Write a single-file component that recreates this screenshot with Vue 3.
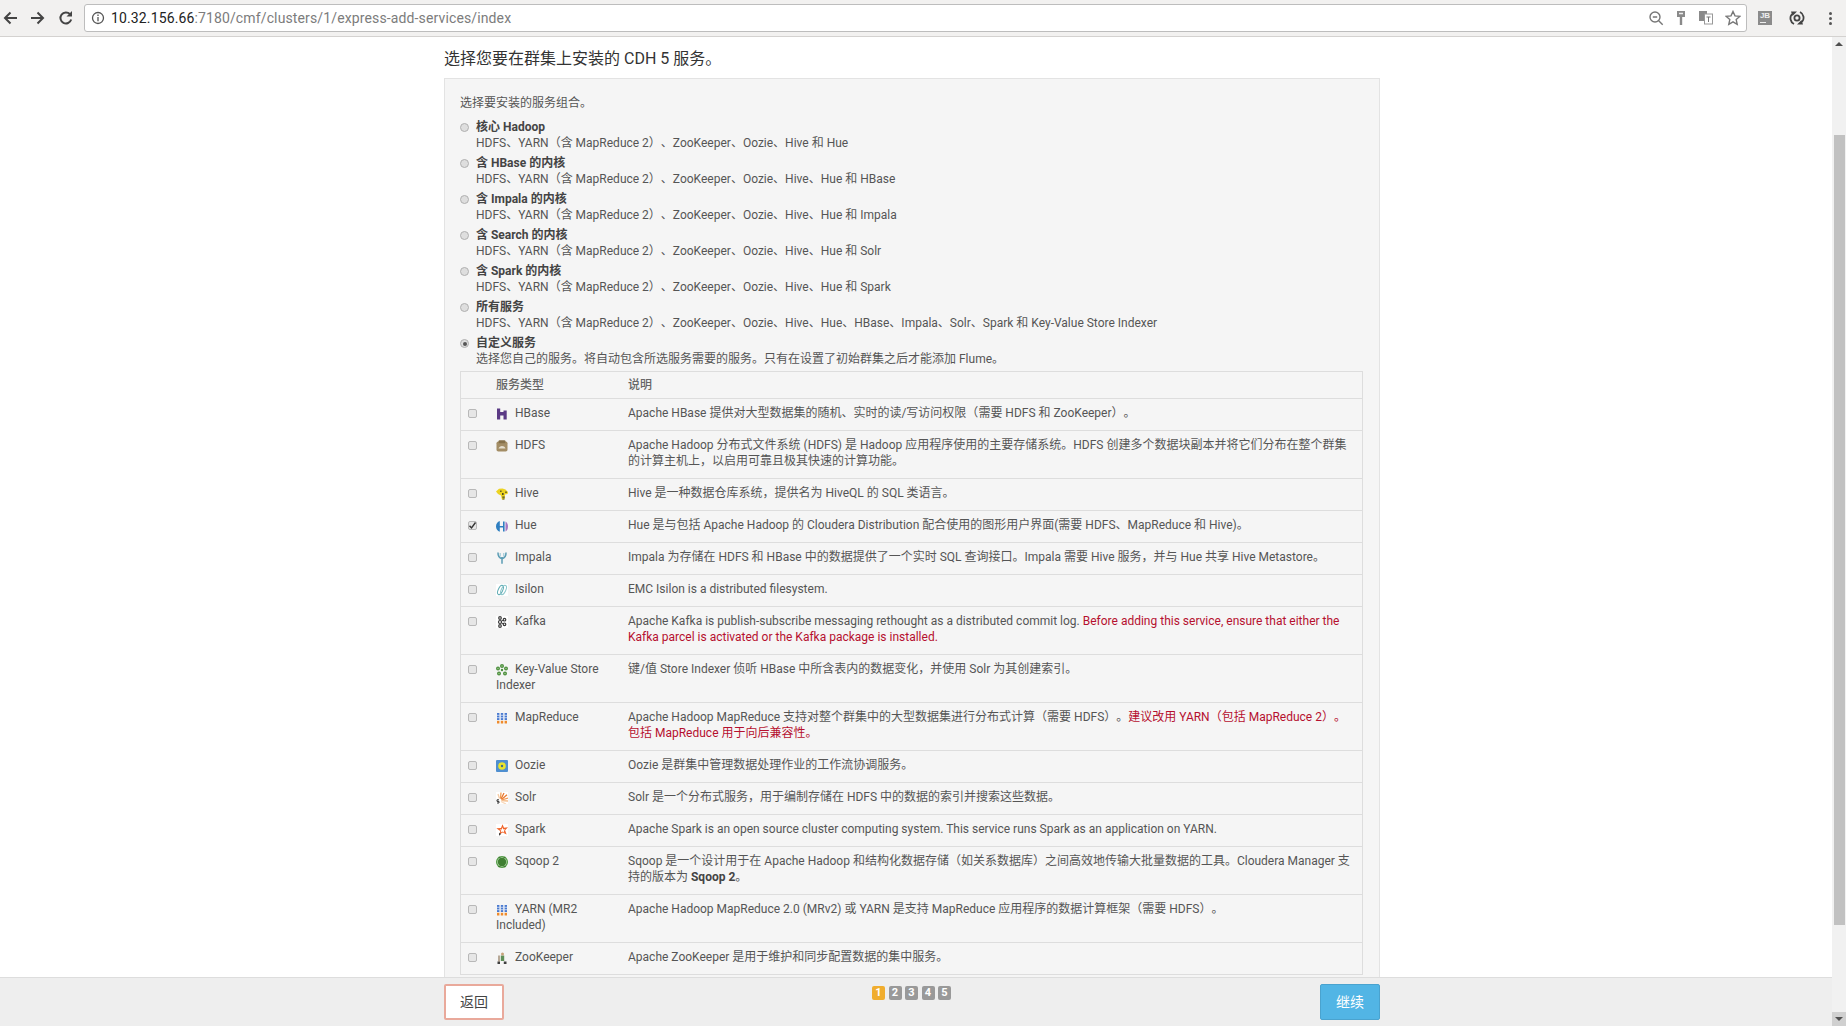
<script setup>
const plans = [
  { t: '核心 Hadoop', d: 'HDFS、YARN（含 MapReduce 2）、ZooKeeper、Oozie、Hive 和 Hue' },
  { t: '含 HBase 的内核', d: 'HDFS、YARN（含 MapReduce 2）、ZooKeeper、Oozie、Hive、Hue 和 HBase' },
  { t: '含 Impala 的内核', d: 'HDFS、YARN（含 MapReduce 2）、ZooKeeper、Oozie、Hive、Hue 和 Impala' },
  { t: '含 Search 的内核', d: 'HDFS、YARN（含 MapReduce 2）、ZooKeeper、Oozie、Hive、Hue 和 Solr' },
  { t: '含 Spark 的内核', d: 'HDFS、YARN（含 MapReduce 2）、ZooKeeper、Oozie、Hive、Hue 和 Spark' },
  { t: '所有服务', d: 'HDFS、YARN（含 MapReduce 2）、ZooKeeper、Oozie、Hive、Hue、HBase、Impala、Solr、Spark 和 Key-Value Store Indexer' },
  { t: '自定义服务', d: '选择您自己的服务。将自动包含所选服务需要的服务。只有在设置了初始群集之后才能添加 Flume。', on: true },
]
const services = [
  { n: 'HBase', i: 'hbase', d: [['Apache HBase 提供对大型数据集的随机、实时的读/写访问权限（需要 HDFS 和 ZooKeeper）。']] },
  { n: 'HDFS', i: 'hdfs', d: [['Apache Hadoop 分布式文件系统 (HDFS) 是 Hadoop 应用程序使用的主要存储系统。HDFS 创建多个数据块副本并将它们分布在整个群集的计算主机上，以启用可靠且极其快速的计算功能。']] },
  { n: 'Hive', i: 'hive', d: [['Hive 是一种数据仓库系统，提供名为 HiveQL 的 SQL 类语言。']] },
  { n: 'Hue', i: 'hue', on: true, d: [['Hue 是与包括 Apache Hadoop 的 Cloudera Distribution 配合使用的图形用户界面(需要 HDFS、MapReduce 和 Hive)。']] },
  { n: 'Impala', i: 'impala', d: [['Impala 为存储在 HDFS 和 HBase 中的数据提供了一个实时 SQL 查询接口。Impala 需要 Hive 服务，并与 Hue 共享 Hive Metastore。']] },
  { n: 'Isilon', i: 'isilon', d: [['EMC Isilon is a distributed filesystem.']] },
  { n: 'Kafka', i: 'kafka', d: [['Apache Kafka is publish-subscribe messaging rethought as a distributed commit log. '], ['Before adding this service, ensure that either the Kafka parcel is activated or the Kafka package is installed.', 'red']] },
  { n: 'Key-Value Store Indexer', i: 'kv', d: [['键/值 Store Indexer 侦听 HBase 中所含表内的数据变化，并使用 Solr 为其创建索引。']] },
  { n: 'MapReduce', i: 'mr', d: [['Apache Hadoop MapReduce 支持对整个群集中的大型数据集进行分布式计算（需要 HDFS）。'], ['建议改用 YARN（包括 MapReduce 2）。包括 MapReduce 用于向后兼容性。', 'red']] },
  { n: 'Oozie', i: 'oozie', d: [['Oozie 是群集中管理数据处理作业的工作流协调服务。']] },
  { n: 'Solr', i: 'solr', d: [['Solr 是一个分布式服务，用于编制存储在 HDFS 中的数据的索引并搜索这些数据。']] },
  { n: 'Spark', i: 'spark', d: [['Apache Spark is an open source cluster computing system. This service runs Spark as an application on YARN.']] },
  { n: 'Sqoop 2', i: 'sqoop', d: [['Sqoop 是一个设计用于在 Apache Hadoop 和结构化数据存储（如关系数据库）之间高效地传输大批量数据的工具。Cloudera Manager 支持的版本为 '], ['Sqoop 2', 'bold'], ['。']] },
  { n: 'YARN (MR2 Included)', i: 'mr', d: [['Apache Hadoop MapReduce 2.0 (MRv2) 或 YARN 是支持 MapReduce 应用程序的数据计算框架（需要 HDFS）。']] },
  { n: 'ZooKeeper', i: 'zk', d: [['Apache ZooKeeper 是用于维护和同步配置数据的集中服务。']] },
]
const steps = [1, 2, 3, 4, 5]
</script>

<template>
  <div class="window">
    <header class="toolbar">
      <svg class="nav" width="16" height="16" viewBox="0 0 16 16"><path d="M15 8H3M8.5 2.500 3 8l5.500 5.500" /></svg>
      <svg class="nav" width="16" height="16" viewBox="0 0 16 16"><path d="M1 8h12M7.500 2.500 13 8l-5.500 5.500" /></svg>
      <svg class="nav" width="16" height="16" viewBox="0 0 16 16"><path d="M13.200 9.500A5.500 5.500 0 1 1 12 4.200" /><path class="fill" d="M14 1v5.500H8.500z" /></svg>
      <div class="omnibox">
        <svg class="info" width="14" height="14" viewBox="0 0 14 14"><circle cx="7" cy="7" r="5.500" /><path d="M7 6v4.200M7 3.600v1.300" /></svg>
        <span class="url"><b>10.32.156.66</b>:7180/cmf/clusters/1/express-add-services/index</span>
        <div class="omni-icons">
          <svg width="16" height="16" viewBox="0 0 16 16"><circle cx="7" cy="7" r="5" /><path d="M4.800 7h4.400M10.700 10.700l4 4" /></svg>
          <svg width="12" height="16" viewBox="0 0 12 16"><path class="fill key" d="M2 1h8v6H7.200v8H4.800V7H2z" /><path class="notch" d="M4 3.500h4" /></svg>
          <svg width="16" height="16" viewBox="0 0 16 16"><rect class="fill key" x="1" y="1" width="8" height="10" /><rect x="6.500" y="4" width="8" height="10" class="paper" /><path d="M8.500 7h4M10.500 7v5" class="thin" /></svg>
          <svg width="16" height="16" viewBox="0 0 16 16"><path d="m8 1.500 2 4.400 4.800.5-3.600 3.200 1 4.700L8 11.900l-4.200 2.400 1-4.700-3.600-3.200 4.800-.5z" /></svg>
        </div>
      </div>
      <div class="ext-icons">
        <span class="jb">JB<i></i></span>
        <svg width="16" height="16" viewBox="0 0 16 16"><path class="bold" d="M3 4a6.500 6.500 0 0 0 2 10M13 12A6.500 6.500 0 0 0 11 2" /><circle class="bold" cx="8" cy="8" r="2.600" /><path class="fill dark" d="M2 1.500h6L3.500 6zM14 14.500H8L12.500 10z" /></svg>
        <span class="dots"><i></i><i></i><i></i></span>
      </div>
    </header>

    <div class="viewport">
      <div class="page">
        <main class="content">
          <h1 class="title">选择您要在群集上安装的 CDH 5 服务。</h1>
          <section class="panel">
            <p class="lead">选择要安装的服务组合。</p>
            <div class="plans">
              <label v-for="p in plans" :key="p.t" class="plan">
                <span class="radio" :class="{ on: p.on }"></span>
                <span class="plan-text"><strong>{{ p.t }}</strong><span>{{ p.d }}</span></span>
              </label>
            </div>
            <table class="services">
              <thead>
                <tr><th class="c1"></th><th class="c2">服务类型</th><th>说明</th></tr>
              </thead>
              <tbody>
                <tr v-for="s in services" :key="s.n">
                  <td class="c1"><span class="check" :class="{ on: s.on }"><svg v-if="s.on" width="9" height="9" viewBox="0 0 9 9"><path d="M1.500 4.800 3.500 7l4-5.500" /></svg></span></td>
                  <td class="c2">
                    <svg class="icon" width="12" height="12" viewBox="0 0 12 12">
                      <g v-if="s.i === 'hbase'"><path fill="#5b3a85" d="M1 .5h3.200V4h3.300V2.500h3.200V11.500H7.500V7.500H4.200v4H1z" /></g>
                      <g v-else-if="s.i === 'hdfs'"><rect x=".5" y="1.500" width="11" height="10" rx="1.800" fill="#a38d65" /><rect x="2.500" y=".2" width="7" height="3" rx="1.200" fill="#857049" /><path d="M2.500 8.500C3.500 5.500 8 5 9.500 8.500z" fill="#e6dfcf" /></g>
                      <g v-else-if="s.i === 'hive'"><path fill="#ecd321" d="M0 3.500 3 .8 6.500.5 9.500 1.500 12 4l-.5 2-2.500.5-.3 4.500-2.700.8-1-4.300-3-1.500z" /><path fill="#4d4a20" d="M4.200 2.500h1.300v1.600H4.200zM6 5h1.600v2H6zM9.300 3.500h1.400v1.400H9.300zM6.300 8.500h2.400v1.300H6.300zM6.500 10.500h2v1H6.500z" /></g>
                      <g v-else-if="s.i === 'hue'"><path fill="#2f7fc1" d="M3.800 1C1.500 1.800 0 3.800 0 6.500s1.500 4.400 3.800 5.200V7.600H7v3.900h1.600V1.500H7v4.400H3.800z" /><path fill="#a577c4" d="M9.500 1.500C11 2.400 12 4 12 6.500s-1 4.200-2.500 5z" /></g>
                      <g v-else-if="s.i === 'impala'"><path fill="none" stroke="#5b9cb4" stroke-width="1.500" d="M2 .5C1.800 4.500 3.500 6 6 6.800M10 .5C10.200 4.500 8.500 6 6 6.800M6 5v6.800" /><path fill="none" stroke="#93c3d2" d="M4.200 1v3.500M7.800 1v3.500" /></g>
                      <g v-else-if="s.i === 'isilon'"><rect width="12" height="12" fill="#fff" /><ellipse cx="4.500" cy="6" rx="2.200" ry="5" fill="none" stroke="#5fabb3" transform="rotate(25 4.500 6)" /><ellipse cx="7.500" cy="6" rx="2.200" ry="5" fill="none" stroke="#8cc6cb" transform="rotate(25 7.500 6)" /></g>
                      <g v-else-if="s.i === 'kafka'"><rect width="12" height="12" fill="#fff" /><g fill="none" stroke="#3a3a3a" stroke-width="1.200"><circle cx="4" cy="2" r="1.300" /><circle cx="4" cy="6" r="1.500" /><circle cx="4" cy="10" r="1.300" /><circle cx="8.500" cy="3.700" r="1.300" /><circle cx="8.500" cy="8.300" r="1.300" /></g><path stroke="#3a3a3a" d="M5 5.500 7.500 4M5 6.500 7.500 8" /></g>
                      <g v-else-if="s.i === 'kv'"><g fill="#4d8f3f"><circle cx="6" cy="2" r="2" /><circle cx="2" cy="4.500" r="2" /><circle cx="10" cy="4.500" r="2" /><circle cx="3" cy="9.500" r="2" /><circle cx="9" cy="9.500" r="2" /><circle cx="6" cy="6" r="1.200" /></g><g fill="#a6d196"><circle cx="6" cy="2" r=".7" /><circle cx="2" cy="4.500" r=".7" /><circle cx="10" cy="4.500" r=".7" /><circle cx="3" cy="9.500" r=".7" /><circle cx="9" cy="9.500" r=".7" /></g></g>
                      <g v-else-if="s.i === 'mr'"><g fill="#4a7ad0"><rect x="1" y="1" width="2.400" height="7" /><rect x="4.800" y="1" width="2.400" height="7" /><rect x="8.600" y="1" width="2.400" height="7" /></g><g fill="#ef8b2c"><rect x="1" y="8.800" width="2.400" height="2.700" /><rect x="4.800" y="8.800" width="2.400" height="2.700" /><rect x="8.600" y="8.800" width="2.400" height="2.700" /></g><path stroke="#d7e2f5" stroke-width=".8" d="M1 3.300h10M1 5.700h10" /></g>
                      <g v-else-if="s.i === 'oozie'"><rect width="12" height="12" rx="1" fill="#4f8fd0" /><circle cx="6" cy="6" r="3.800" fill="#e9e42c" /><circle cx="6" cy="6" r="1.200" fill="#3f6e8c" /></g>
                      <g v-else-if="s.i === 'solr'"><rect width="12" height="12" fill="#fff" /><g stroke-width="1.300" fill="none"><path stroke="#f5c9a0" d="M3.500 6.500 2 2" /><path stroke="#ee9a50" d="M4.500 6.500 5 .5" /><path stroke="#e8742a" d="M5 7 8 1" /><path stroke="#ea7a30" d="M5.500 7.500 11 2.800" /><path stroke="#f09a58" d="M5.500 8 12 6" /><path stroke="#f5bd8a" d="M5.500 8.700 12 9" /><path stroke="#f8d8ba" d="M5 9.500 10 12" /></g><path fill="none" stroke="#333" d="M3 7.800H1v1.600h2V11H1" /></g>
                      <g v-else-if="s.i === 'spark'"><rect width="12" height="12" fill="#fff" /><path fill="#f0652b" d="M6.500.3 8 3.800l4-.5-2.900 3 1.500 4.200-3.900-1.900-3.200 2 .7-3.600L.3 4.300 5 4z" /><path fill="#fff" d="m6.300 3.300.9 2 2 .1L7.700 7l.6 1.700-1.900-1.100-1.500 1 .4-1.800-1.500-1.300 2-.1z" /><path fill="#222" d="m3.300 8.800 1.700 1.200-1.900 1.700z" /></g>
                      <g v-else-if="s.i === 'sqoop'"><circle cx="6" cy="6" r="6" fill="#4f9a41" /><circle cx="6" cy="6" r="4.800" fill="#bcd9b3" /><circle cx="6" cy="6" r="4.200" fill="#3f7f32" /><path fill="#3f7f32" d="M2.500.8h2v1.500h-2zM7.500.8h2v1.500h-2zM2.500 9.800h2v1.500h-2zM7.500 9.800h2v1.500h-2z" /></g>
                      <g v-else-if="s.i === 'zk'"><rect width="12" height="12" fill="#f5f5f5" /><path fill="#5f8f58" d="M4.800 3.500h3.400V9H4.800z" /><circle cx="6.500" cy="2" r="1.500" fill="#c7a27a" /><path fill="#3f3f3f" d="M1.500 9.500h2.500V12H1.500zM7.800 9.500h2.700V12H7.800z" /><path stroke="#7a5c3a" d="M3 3.500v6" /></g>
                    </svg>{{ s.n }}
                  </td>
                  <td class="c3"><span v-for="(part, k) in s.d" :key="k" :class="part[1]">{{ part[0] }}</span></td>
                </tr>
              </tbody>
            </table>
          </section>
        </main>
        <footer class="footer">
          <div class="footer-inner">
            <button class="btn back">返回</button>
            <div class="pager"><span v-for="n in steps" :key="n" class="step" :class="{ on: n === 1 }">{{ n }}</span></div>
            <button class="btn next">继续</button>
          </div>
        </footer>
      </div>
      <aside class="scrollbar">
        <span class="arrow-btn"><i class="up"></i></span>
        <div class="track"><div class="thumb"></div></div>
        <span class="arrow-btn down"><i class="dn"></i></span>
      </aside>
    </div>
  </div>
</template>

<style>
html, body { margin: 0; height: 100%; overflow: hidden; background: #fff; }
</style>

<style scoped>
.window { width: 1846px; height: 1026px; display: flex; flex-direction: column; font-family: Roboto, "Noto Sans CJK SC", sans-serif; font-size: 12px; line-height: 16px; color: #555; text-spacing-trim: space-all; }
.toolbar { height: 36px; flex: none; display: flex; align-items: center; background: #f2f1f0; border-bottom: 1px solid #d4d2d0; padding-left: 2px; }
.nav { fill: none; stroke: #444; stroke-width: 2; margin-right: 12px; flex: none; }
.nav .fill { fill: #444; stroke: none; }
.omnibox { margin-left: -2px; width: 1663px; height: 28px; box-sizing: border-box; background: #fff; border: 1px solid #bdbdbd; border-radius: 3px; display: flex; align-items: center; padding-left: 6px; flex: none; }
.info { fill: none; stroke: #555; stroke-width: 1.300; }
.url { margin-left: 6px; font-size: 14px; color: #7c7c7c; letter-spacing: .13px; }
.url b { font-weight: 400; color: #222; }
.omni-icons { margin-left: auto; display: flex; align-items: center; gap: 11px; padding-right: 5px; }
.omni-icons svg { fill: none; stroke: #777; stroke-width: 1.400; }
.omni-icons .fill { stroke: none; }
.omni-icons .key { fill: #8a8a8a; }
.omni-icons .notch { stroke: #eee; stroke-width: 1.500; }
.omni-icons .paper { fill: #fff; stroke: #999; stroke-width: 1; }
.omni-icons .thin { stroke-width: 1; }
.ext-icons { flex: 1; display: flex; align-items: center; padding-left: 11px; gap: 17px; }
.ext-icons svg { fill: none; stroke: #444; }
.ext-icons .bold { stroke-width: 1.800; }
.ext-icons .fill { stroke: none; }
.ext-icons .dark { fill: #444; }
.jb { width: 14px; height: 14px; background: #8b8b8b; color: #eee; font: 700 8px/10px "Liberation Sans", sans-serif; text-align: center; position: relative; }
.jb i { position: absolute; left: 2px; bottom: 2px; width: 6px; height: 1px; background: #eee; }
.dots { display: flex; flex-direction: column; gap: 2px; margin-left: 7px; }
.dots i { width: 3px; height: 3px; border-radius: 50%; background: #555; }

.viewport { flex: 1; min-height: 0; display: flex; }
.page { flex: 1; min-width: 0; display: flex; flex-direction: column; }
.content { flex: 1; min-height: 0; overflow: hidden; padding: 0 452px 0 444px; }
.title { margin: 12px 0 9px; font-size: 16px; line-height: 20px; font-weight: 400; color: #333; }
.panel { background: #f5f5f5; border: 1px solid #e3e3e3; padding: 16px 16px 15px 15px; }
.lead { margin: 0 0 8px; }
.plan { display: flex; gap: 7px; margin-bottom: 4px; }
.radio { flex: none; width: 9px; height: 9px; margin-top: 4px; box-sizing: border-box; border: 1px solid #b0b0b0; border-radius: 50%; background: #dedede; display: flex; align-items: center; justify-content: center; }
.radio.on::after { content: ""; width: 4px; height: 4px; border-radius: 50%; background: #555; }
.plan-text { display: flex; flex-direction: column; }
.plan-text strong { color: #444; font-weight: 700; }
.services { width: 100%; margin-top: 0; border-collapse: collapse; table-layout: fixed; background: #f5f5f5; border: 1px solid #ddd; }
.services th { text-align: left; font-weight: 500; color: #666; padding: 5px 8px; border-bottom: 1px solid #ddd; }
.services td { padding: 6px 8px 9px; vertical-align: top; border-bottom: 1px solid #ddd; color: #555; }
.c1 { width: 19px; }
.c2 { width: 116px; }
th.c1, td.c1 { padding-right: 0; }
.services td.c1 { padding-left: 7px; }
.check { display: block; width: 9px; height: 9px; margin-top: 4px; box-sizing: border-box; border: 1px solid #b8b8b8; border-radius: 2px; background: #e6e6e6; position: relative; }
.check svg { position: absolute; left: -1px; top: -1px; fill: none; stroke: #333; stroke-width: 1.400; }
.icon { vertical-align: -3px; margin: 0 7px 0 0; }
.red { color: #b5102f; }
.bold { font-weight: 700; color: #444; }

.footer { flex: none; height: 49px; box-sizing: border-box; background: #eee; border-top: 1px solid #ddd; }
.footer-inner { padding: 6px 452px 0 444px; display: flex; justify-content: space-between; align-items: flex-start; position: relative; }
.btn { width: 60px; height: 36px; box-sizing: border-box; border-radius: 2px; font: 14px/1 Roboto, "Noto Sans CJK SC", sans-serif; cursor: pointer; }
.back { background: #fff; border: 2px solid #e9a99b; color: #444; }
.next { background: #52b5e5; border: 1px solid #4aa3cf; color: #fff; }
.pager { display: flex; gap: 3.500px; margin-top: 2px; margin-left: -1px; }
.step { width: 13px; height: 14px; border-radius: 2px; background: #999; color: #fff; font-size: 11px; font-weight: 700; line-height: 14px; text-align: center; }
.step.on { background: #f0ad2e; }

.scrollbar { width: 14px; flex: none; display: flex; flex-direction: column; background: #f1f1f1; }
.arrow-btn { height: 14px; flex: none; display: flex; align-items: center; justify-content: center; }
.arrow-btn.down { background: #d0d0d0; }
.up { border: 4px solid transparent; border-top: 0; border-bottom: 4px solid #505050; }
.dn { border: 4px solid transparent; border-bottom: 0; border-top: 4px solid #505050; }
.track { flex: 1; padding: 84px 1px 87px 2px; }
.thumb { height: 100%; background: #c1c1c1; }
</style>
